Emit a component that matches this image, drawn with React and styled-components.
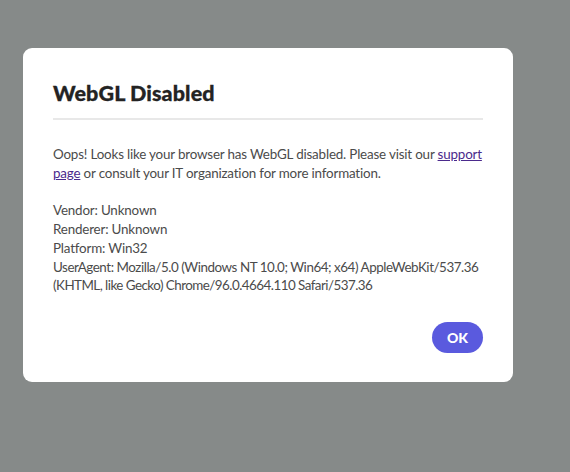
import React from "react";
import styled, { createGlobalStyle } from "styled-components";

const Global = createGlobalStyle`
  html, body { margin: 0; padding: 0; background: #868a89; }
  body { width: 570px; height: 472px; overflow: hidden; font-family: Lato, "Open Sans", sans-serif; }
`;

const Overlay = styled.div`
  width: 570px;
  height: 472px;
  padding: 48px 0 0 23px;
  box-sizing: border-box;
`;

const Dialog = styled.div`
  width: 490px;
  height: 334px;
  box-sizing: border-box;
  background: #ffffff;
  border-radius: 9px;
  padding: 30px 30px 29px 30px;
  display: flex;
  flex-direction: column;
`;

const Title = styled.h2`
  margin: 0;
  font-family: Lato, sans-serif;
  font-weight: 900;
  font-size: 21.5px;
  letter-spacing: 0.1px;
  line-height: 30px;
  color: #232323;
  padding-bottom: 10px;
  border-bottom: 2px solid #e8e8e8;
  -webkit-text-stroke: 0.3px #232323;
`;

const Body = styled.div`
  margin-top: 25px;
  font-size: 13.4px;
  line-height: 18.75px;
  color: #4b4b4b;
  flex: 1;
`;

const Para = styled.p`
  margin: 0 0 18.75px 0;
`;

const Line = styled.span`
  display: block;
  white-space: nowrap;
  letter-spacing: ${(p) => (p.$tight !== undefined ? p.$tight : -0.18)}px;
`;

const Link = styled.a`
  color: #4b2a8c;
  text-decoration: underline;
`;

const Footer = styled.div`
  display: flex;
  justify-content: flex-end;
`;

const OkButton = styled.button`
  width: 51px;
  height: 31px;
  border-radius: 16px;
  border: none;
  background: #5a5ade;
  color: #ffffff;
  font-family: Lato, sans-serif;
  font-weight: 900;
  font-size: 14px;
  cursor: pointer;
`;

export default function App() {
  return (
    <>
      <Global />
      <Overlay>
        <Dialog>
          <Title>WebGL Disabled</Title>
          <Body>
            <Para>
              <Line>
                Oops! Looks like your browser has WebGL disabled. Please visit our <Link href="#">support</Link>
              </Line>
              <Line>
                <Link href="#">page</Link> or consult your IT organization for more information.
              </Line>
            </Para>
            <Para>
              <Line>Vendor: Unknown</Line>
              <Line>Renderer: Unknown</Line>
              <Line>Platform: Win32</Line>
              <Line $tight={-0.45}>UserAgent: Mozilla/5.0 (Windows NT 10.0; Win64; x64) AppleWebKit/537.36</Line>
              <Line $tight={-0.53}>(KHTML, like Gecko) Chrome/96.0.4664.110 Safari/537.36</Line>
            </Para>
          </Body>
          <Footer>
            <OkButton>OK</OkButton>
          </Footer>
        </Dialog>
      </Overlay>
    </>
  );
}
